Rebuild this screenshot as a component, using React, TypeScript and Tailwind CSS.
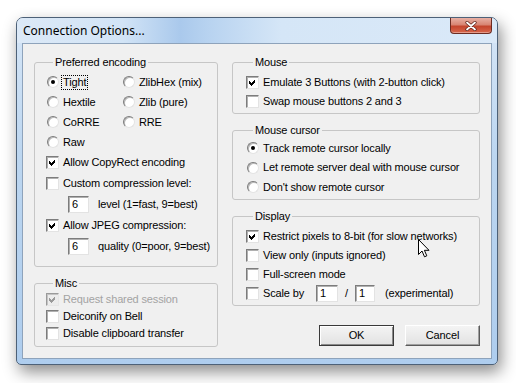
import React from "react";

function CheckMark({ color = "#000" }: { color?: string }) {
  return (
    <svg width="7" height="7" viewBox="0 0 7 7" shapeRendering="crispEdges">
      <polygon points="0,2 2,4 6,0 6,3 2,7 0,5" fill={color} />
    </svg>
  );
}

function Box({ checked, disabled }: { checked?: boolean; disabled?: boolean }) {
  return (
    <span
      className={
        disabled
          ? "w-[13px] h-[13px] shrink-0 flex items-center justify-center border border-t-[#9a9a9a] border-l-[#9a9a9a] border-r-[#e6e6e6] border-b-[#e6e6e6] bg-[#ececec] shadow-[inset_1px_1px_0_#c4c4c4]"
          : "w-[13px] h-[13px] shrink-0 flex items-center justify-center border border-t-[#7c7c7c] border-l-[#7c7c7c] border-r-[#e3e3e3] border-b-[#e3e3e3] bg-white shadow-[inset_1px_1px_0_#b0b0b0]"
      }
    >
      {checked && <CheckMark color={disabled ? "#9a9a9a" : "#000"} />}
    </span>
  );
}

function Check({
  label,
  checked,
  disabled,
  className,
}: {
  label: string;
  checked?: boolean;
  disabled?: boolean;
  className: string;
}) {
  return (
    <div className={"flex items-center gap-[4px] " + className}>
      <Box checked={checked} disabled={disabled} />
      <span className={disabled ? "text-[#a3a3a3]" : "text-black"}>{label}</span>
    </div>
  );
}

function Radio({
  label,
  checked,
  focus,
  className,
}: {
  label: string;
  checked?: boolean;
  focus?: boolean;
  className: string;
}) {
  return (
    <div className={"flex items-center gap-[4px] " + className}>
      <span className="w-[13px] h-[13px] shrink-0 flex items-center justify-center">
        <span className="w-[12px] h-[12px] rounded-full bg-white border border-t-[#7c7c7c] border-l-[#7c7c7c] border-r-[#e3e3e3] border-b-[#e3e3e3] shadow-[inset_1px_1px_0_#b8b8b8] flex items-center justify-center">
          {checked && <span className="w-[4px] h-[4px] rounded-full bg-black" />}
        </span>
      </span>
      <span
        className={
          focus
            ? "text-black outline-1 outline-dotted outline-black px-[1px] -ml-[1px] leading-[13px]"
            : "text-black"
        }
      >
        {label}
      </span>
    </div>
  );
}

function Field({ value, className }: { value: string; className: string }) {
  return (
    <span
      className={
        "h-[17px] shrink-0 bg-white border border-t-[#7c7c7c] border-l-[#7c7c7c] border-r-[#e3e3e3] border-b-[#e3e3e3] shadow-[inset_1px_1px_0_#b0b0b0] pl-[3px] leading-[15px] text-black " +
        className
      }
    >
      {value}
    </span>
  );
}

function Group({
  title,
  className,
  children,
}: {
  title: string;
  className: string;
  children: React.ReactNode;
}) {
  return (
    <fieldset className={"border border-[#c6c6c6] rounded-[3px] " + className}>
      <legend className="ml-[7px] px-[2px] leading-[13px] text-black">{title}</legend>
      {children}
    </fieldset>
  );
}

function Button({ label, def }: { label: string; def?: boolean }) {
  return (
    <div
      className={
        def
          ? "w-[75px] h-[21px] flex items-center justify-center border border-[#3a3a3a] bg-[linear-gradient(#f4f4f4,#e2e2e2)] shadow-[inset_1px_1px_0_#ffffff,inset_-1px_-1px_0_#8a8a8a]"
          : "w-[75px] h-[21px] flex items-center justify-center border border-t-[#ffffff] border-l-[#ffffff] border-r-[#5a5a5a] border-b-[#5a5a5a] bg-[linear-gradient(#f4f4f4,#e2e2e2)] shadow-[inset_-1px_-1px_0_#a0a0a0]"
      }
    >
      <span className="text-black">{label}</span>
    </div>
  );
}

export default function App() {
  return (
    <div className="relative w-[516px] h-[383px] bg-white pl-[16px] pt-[17px] font-['Liberation_Sans',Arial,sans-serif] text-[11px] tracking-[-0.15px] overflow-hidden">
      <div className="w-[482px] h-[348px] flex flex-col border border-[#4d6178] rounded-t-[7px] rounded-b-[5px] px-[5px] pb-[5px] bg-[linear-gradient(180deg,#d6e6f7_0%,#bcd6f0_40%,#aecdee_100%)] shadow-[3px_7px_16px_rgba(0,0,0,0.45)]">
        <div className="h-[25px] flex justify-between -mx-[5px] px-[5px] rounded-t-[6px] bg-[linear-gradient(90deg,#dce9f7_0%,#d2e4f6_22%,#aac9ec_34%,#b8d3f0_40%,#d5e6f7_55%,#dae9f8_100%)]">
          <span className="self-center pl-[1px] text-[12px] tracking-normal text-black font-['Noto_Sans',sans-serif] leading-[16px]">
            Connection Options...
          </span>
          <div className="w-[42px] h-[16px] flex items-center justify-center rounded-b-[4px] border border-t-0 border-[#6c2c22] bg-[linear-gradient(180deg,#e8b0a4_0%,#d88573_45%,#c4452d_55%,#d8674c_100%)] shadow-[inset_0_-1px_0_rgba(255,255,255,0.35)]">
            <svg width="12" height="10" viewBox="0 0 12 10">
              <path d="M2 1.5 L10 8.5 M10 1.5 L2 8.5" stroke="#5a1f17" strokeWidth="3.2" strokeLinecap="round" />
              <path d="M2 1.5 L10 8.5 M10 1.5 L2 8.5" stroke="#ffffff" strokeWidth="1.8" strokeLinecap="round" />
            </svg>
          </div>
        </div>
        <div className="h-[316px] border border-[#8ea3bb] bg-[#f0f0f0] flex pl-[11px] pt-[12px]">
          <div className="w-[184px] flex flex-col">
            <Group title="Preferred encoding" className="pl-[11px] pt-[3px] pb-[9px]">
              <div className="grid grid-cols-[76px_1fr]">
                <Radio label="Tight" checked focus className="h-[20px]" />
                <Radio label="ZlibHex (mix)" className="h-[20px]" />
                <Radio label="Hextile" className="h-[20px]" />
                <Radio label="Zlib (pure)" className="h-[20px]" />
                <Radio label="CoRRE" className="h-[20px]" />
                <Radio label="RRE" className="h-[20px]" />
                <Radio label="Raw" className="h-[20px]" />
              </div>
              <Check label="Allow CopyRect encoding" checked className="h-[21px]" />
              <Check label="Custom compression level:" className="h-[21px]" />
              <div className="h-[21px] flex items-center pl-[22px]">
                <Field value="6" className="w-[21px]" />
                <span className="ml-[9px]">level (1=fast, 9=best)</span>
              </div>
              <Check label="Allow JPEG compression:" checked className="h-[21px]" />
              <div className="h-[21px] flex items-center pl-[22px]">
                <Field value="6" className="w-[21px]" />
                <span className="ml-[9px]">quality (0=poor, 9=best)</span>
              </div>
            </Group>
            <Group title="Misc" className="mt-[10px] pl-[11px] pt-[1px] pb-[4px]">
              <Check label="Request shared session" checked disabled className="h-[17px]" />
              <Check label="Deiconify on Bell" className="h-[17px]" />
              <Check label="Disable clipboard transfer" className="h-[17px]" />
            </Group>
          </div>
          <div className="w-[248px] ml-[14px] flex flex-col">
            <Group title="Mouse" className="pl-[13px] pt-[3px] pb-[2px]">
              <Check label="Emulate 3 Buttons (with 2-button click)" checked className="h-[20px]" />
              <Check label="Swap mouse buttons 2 and 3" className="h-[19px]" />
            </Group>
            <Group title="Mouse cursor" className="mt-[10px] pl-[13px] pt-[1px] pb-[2px]">
              <Radio label="Track remote cursor locally" checked className="h-[20px]" />
              <Radio label="Let remote server deal with mouse cursor" className="h-[19px]" />
              <Radio label="Don't show remote cursor" className="h-[20px]" />
            </Group>
            <Group title="Display" className="mt-[10px] pl-[13px] pt-[3px] pb-[2px]">
              <Check label="Restrict pixels to 8-bit (for slow networks)" checked className="h-[20px]" />
              <Check label="View only (inputs ignored)" className="h-[19px]" />
              <Check label="Full-screen mode" className="h-[19px]" />
              <div className="h-[19px] flex items-center">
                <Box />
                <span className="ml-[4px] w-[53px]">Scale by</span>
                <Field value="1" className="w-[22px]" />
                <span className="w-[17px] text-center">/</span>
                <Field value="1" className="w-[20px]" />
                <span className="ml-[10px]">(experimental)</span>
              </div>
            </Group>
            <div className="mt-[19px] flex justify-end gap-[11px]">
              <Button label="OK" def />
              <Button label="Cancel" />
            </div>
          </div>
        </div>
      </div>
      <svg
        className="absolute left-[418px] top-[239px]"
        width="13"
        height="20"
        viewBox="0 0 13 20"
      >
        <path
          d="M0.5 0.5 L0.5 15.5 L4 12 L6.5 17.8 L8.8 16.8 L6.4 11.3 L11 11.3 Z"
          fill="#ffffff"
          stroke="#000000"
          strokeWidth="1"
          strokeLinejoin="round"
        />
      </svg>
    </div>
  );
}
